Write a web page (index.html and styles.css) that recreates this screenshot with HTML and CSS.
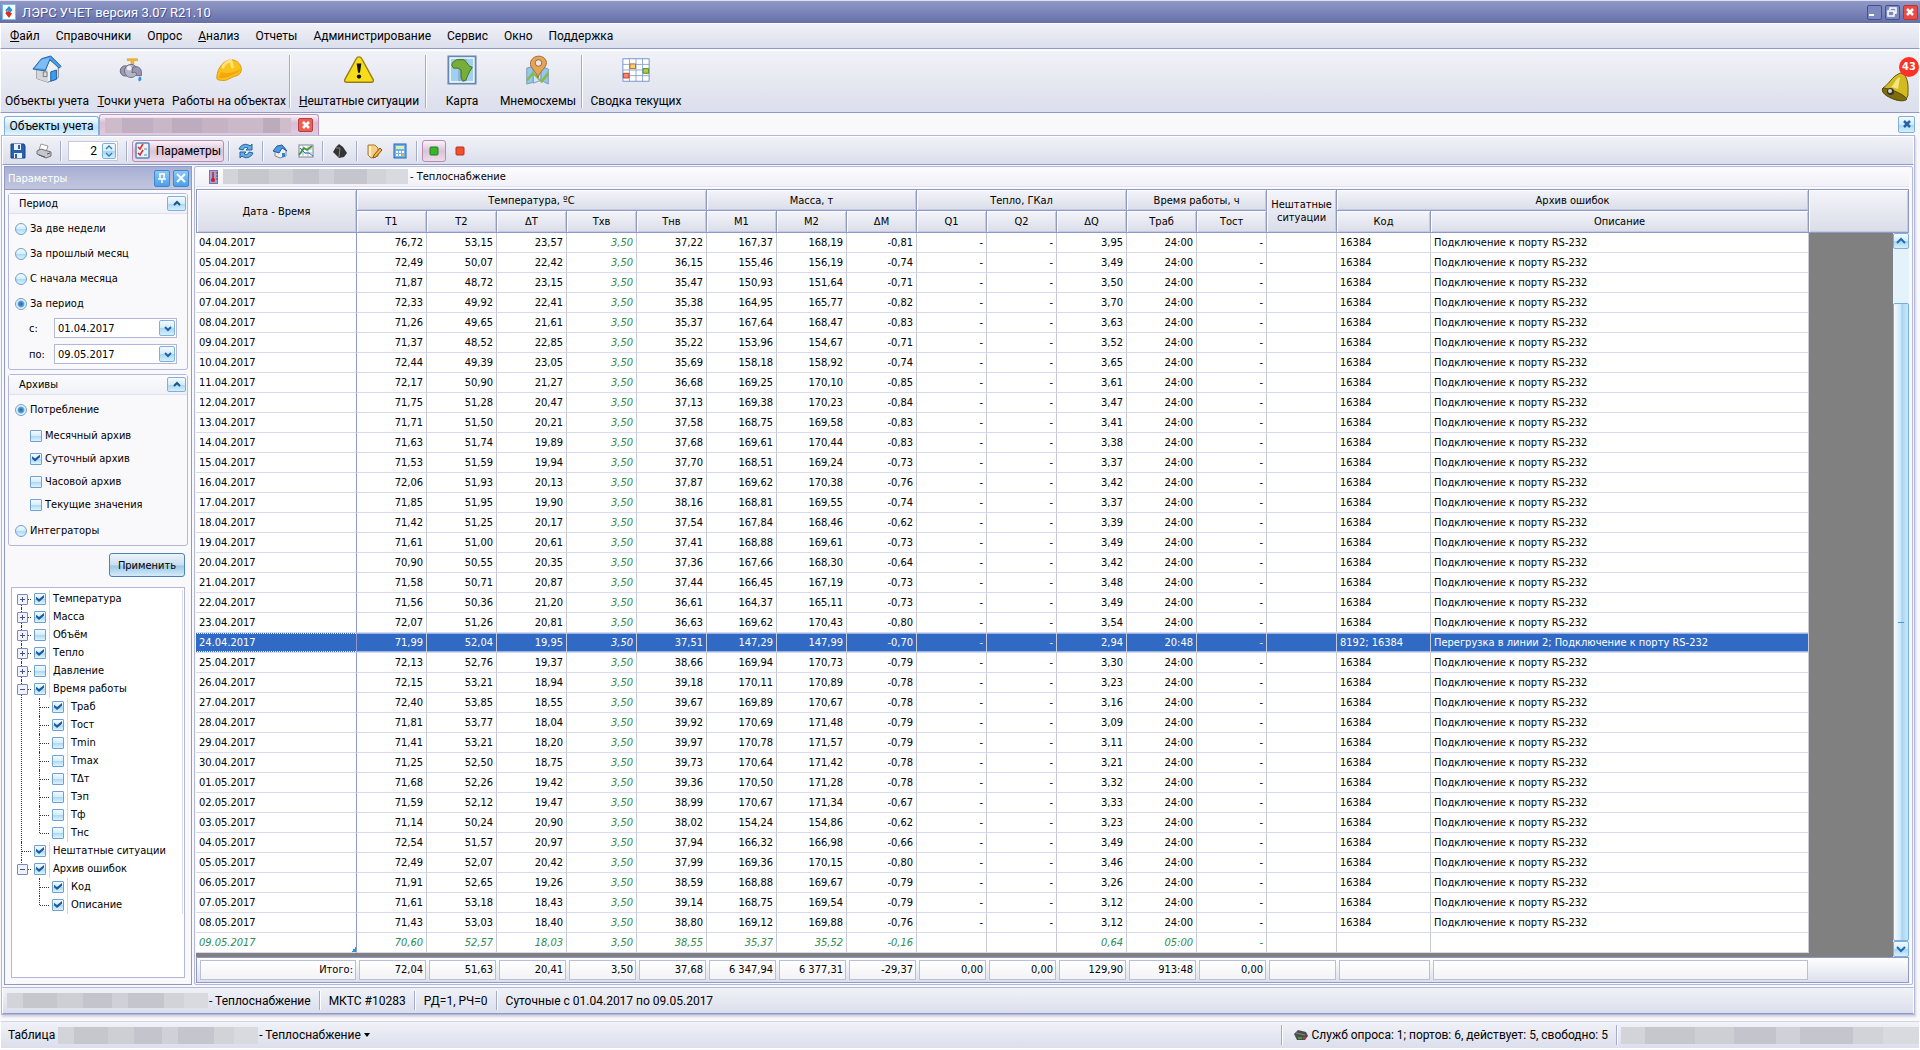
FILE: index.html
```html
<!DOCTYPE html>
<html lang="ru">
<head>
<meta charset="utf-8">
<title>ЛЭРС УЧЕТ версия 3.07 R21.10</title>
<link rel="stylesheet" href="styles.css">
</head>
<body>
<header class="titlebar">
  <svg class="app-icon" width="14" height="16" viewBox="0 0 14 16"><rect x="0.500" y="0.500" width="13" height="15" fill="#fff" stroke="#6cc4ee"/><path d="M7 2l3.500 4-2 2.500L6 6.500 4 8 3.500 6z" fill="#1d9ad8"/><path d="M4 8l2.500-1L10 9.500 7 14 3.500 9.500z" fill="#e22a20"/></svg>
  <h1>ЛЭРС УЧЕТ версия 3.07 R21.10</h1>
  <div class="window-buttons">
    <button aria-label="Свернуть"><svg width="12" height="12"><rect x="1" y="8" width="5" height="2" fill="#fff"/></svg></button>
    <button aria-label="Восстановить"><svg width="12" height="12"><path d="M4 4V2h6v5H8M2 5h6v5H2z" fill="none" stroke="#fff" stroke-width="1.500"/></svg></button>
    <button class="danger" aria-label="Закрыть"><svg width="12" height="12"><path d="M3 3l6 6M9 3l-6 6" stroke="#fff" stroke-width="2.500"/></svg></button>
  </div>
</header>
<nav class="menu bar">
  <a href="#"><u>Ф</u>айл</a><a href="#">Справочники</a><a href="#">Опрос</a><a href="#"><u>А</u>нализ</a><a href="#">Отчеты</a><a href="#">Администрирование</a><a href="#">Сервис</a><a href="#">Окно</a><a href="#">Поддержка</a>
</nav>
<div class="main-tools bar">
  <div class="big-buttons">
    <button><svg width="32" height="32" viewBox="0 0 32 32"><path d="M5 14L11 6l11-2 6 9v11l-11 5-12-4z" fill="#eef0f2" stroke="#777"/><path d="M5 14v11l12 4V17L11 8z" fill="#d3d6da"/><path d="M1 15L10 4l10-3 11 11-2 2-10-9-5 12-13-2z" fill="#4a9be8" stroke="#1d62ae"/><path d="M10 5l9-2 -5 12-11-1z" fill="#7fbdf2"/><path d="M20 18l6-2v10l-6 2z" fill="#3f9df0" stroke="#15599f"/><path d="M12 18h4v5h-4z" fill="#ddd" stroke="#777"/></svg><span>Объекты учета</span></button>
    <button><svg width="32" height="32" viewBox="0 0 32 32"><path d="M12 4h11v2h-4v4h-3V6h-4z" fill="#f5b92e" stroke="#d08a18" stroke-width=".5"/><circle cx="10" cy="17" r="5.500" fill="#9a9aac" stroke="#62627a"/><circle cx="16" cy="17" r="7" fill="#b5b5c8" stroke="#6c6c84"/><path d="M18 13c7-2 10 2 9 9h-5c0-4-2-4-5-3z" fill="#9898b4" stroke="#65657d"/><circle cx="14" cy="14" r="2.500" fill="#ededf6"/><path d="M25 23c-4 6 3 7 2 1z" fill="#2f93e8"/></svg><span><u>Т</u>очки учета</span></button>
    <button><svg width="32" height="32" viewBox="0 0 32 32"><path d="M3 25c0-6 3-18 15-20 7 0 12 6 11 12-1 4-4 5-8 6-6 3-9 5-13 4-3 0-5-1-5-2z" fill="#fcc21c" stroke="#d99308"/><path d="M8 18c3 2 12 2 20-3-1 5-6 5-10 7-5 2-9 4-14 2z" fill="#f3a90c"/><path d="M9 14c2-5 5-7 9-8l2 8" fill="none" stroke="#ffe478" stroke-width="3"/></svg><span>Работы на объектах</span></button>
    <i class="sep"></i>
    <button><svg width="32" height="32" viewBox="0 0 32 32"><path d="M16 2c1 0 2 0 3 2l12 22c1 2 0 3-2 3H3c-2 0-3-1-2-3L13 4c1-2 2-2 3-2z" fill="#f5dd19" stroke="#9c7b16" stroke-width="1.500"/><path d="M13.500 9h5l-1.500 10h-2z" fill="#111"/><circle cx="16" cy="23" r="2.300" fill="#111"/></svg><span><u>Н</u>ештатные ситуации</span></button>
    <i class="sep"></i>
    <button><svg width="32" height="32" viewBox="0 0 32 32"><path d="M1.500 1.500h29v29h-29z" fill="#fff" stroke="#6488b4" stroke-width="2"/><path d="M4 4h24v24H4z" fill="#9fd0f0"/><path d="M12 4h9v24h-9z" fill="#7396b4" opacity=".5"/><path d="M6 8l4-3 8 0 3 3 3 4 3 1-3 5-2 4-2 5-3 1-2-4v-8l-3-2-5 0-2-3z" fill="#78ad38" stroke="#3d6f1c"/></svg><span>Карта</span></button>
    <button><svg width="32" height="32" viewBox="0 0 32 32"><path d="M4 14l7-2v17l-7 2zM19 12l8 3v16l-8-4z" fill="#8fc9ee" stroke="#8494b0"/><path d="M11 12l8 2v13l-8 3z" fill="#cfe6f6" stroke="#8494b0"/><path d="M4 25l7-8 8 10 8-10v5l-7 8-9-9-7 8z" fill="#8bba4c"/><path d="M16 24C14 17 7 14 8 8c2-9 16-9 17 0 0 6-7 9-9 16z" fill="#e5a458" stroke="#9b632c"/><circle cx="16.500" cy="8.500" r="3.500" fill="#ece8e4" stroke="#9b632c"/></svg><span>Мнемосхемы</span></button>
    <i class="sep"></i>
    <button><svg width="32" height="32" viewBox="0 0 32 32"><path d="M2 4h28v24H2z" fill="#fff" stroke="#6f8fc6"/><path d="M9 4v24M16 4v24M23 4v24M2 10h28M2 16h28M2 22h28" stroke="#89a3d0"/><path d="M9.500 9.500h6v5h-6z" fill="#f6cf7c" stroke="#b36c1a"/><path d="M23.500 14.500h6v5h-6z" fill="#a6cf4c" stroke="#5a8420"/><path d="M2.500 19.500h6v5h-6z" fill="#f28478" stroke="#c4382c"/></svg><span>Сводка текущих</span></button>
  </div>
  <button class="bell" aria-label="Уведомления"><svg width="30" height="32" viewBox="0 0 30 32"><path d="M19 3l4 1c5 7 4 14 4 21-1 6-8 7-16 3C3 25 0 21 2 18c5-3 8-9 12-12z" fill="#d3ba20" stroke="#675b0b"/><path d="M2 18c4 0 20 5 24 11-2 3-10 2-16-1C3 25 0 21 2 18z" fill="#7d6c0c" stroke="#554a06"/><path d="M10 17c4-3 4-8 9-10l-2 12z" fill="#f3e680"/><circle cx="9.500" cy="21.500" r="3.500" fill="#333"/><circle cx="9" cy="21" r="2" fill="#d5d5d5"/></svg><span class="badge">43</span></button>
</div>
<div class="tabs">
  <button class="tab">Объекты учета</button>
  <div class="tab active"><i class="mosaic pink"></i><button class="tab-close" aria-label="Закрыть вкладку"><svg width="12" height="12"><path d="M3 3l6 6M9 3l-6 6" stroke="#fff" stroke-width="2.500"/></svg></button></div>
  <button class="square close-doc" aria-label="Закрыть документ"><svg width="14" height="14"><path d="M4 4l6 6M10 4l-6 6" stroke="#2462a6" stroke-width="2.500"/></svg></button>
</div>
<main class="document">
  <div class="tools bar">
    <button aria-label="Сохранить"><svg width="16" height="16"><path d="M1 1h13l1 2v12H1z" fill="#2862ae" stroke="#174280"/><path d="M4 1h7v6H4zM4 10h8v5H4z" fill="#e8f1fa"/><path d="M8 2h2v4H8zM5 11h2v4H5z" fill="#2862ae"/></svg></button>
    <button aria-label="Печать"><svg width="16" height="16"><path d="M3 7l2-6 7 2-2 6z" fill="#fff" stroke="#999"/><path d="M1 8l4-2 10 3v4l-5 2-9-4z" fill="#c4c6cb" stroke="#6d6f75"/><path d="M3 12l6 2M11 11l3-1" stroke="#555"/></svg></button>
    <i class="sep"></i>
    <span class="spinner"><input aria-label="Число знаков" value="2"><button class="square" aria-label="Изменить"><svg width="10" height="14"><path d="M2 5l3-3 3 3M2 9l3 3 3-3" fill="none" stroke="#287cb8" stroke-width="1.300"/></svg></button></span>
    <i class="sep"></i>
    <button class="pressed wide"><svg width="16" height="18"><rect x="1" y="1" width="13" height="15" rx="1" fill="#e7f1fa" stroke="#5389be" stroke-width="1.500"/><path d="M3 5l2 2 3-5M3 11l2 2 3-5" fill="none" stroke="#d92c22" stroke-width="1.500"/><path d="M9 7h3M9 13h3" stroke="#5389be"/></svg>Параметры</button>
    <i class="sep"></i>
    <button aria-label="Обновить"><svg width="16" height="16"><path d="M1 6c2-5 8-6 11-3l2-2v6H8l2-2C8 4 6 4 5 7z" fill="#64aee6" stroke="#23629f"/><path d="M15 10c-2 5-8 6-11 3l-2 2V9h6l-2 2c2 1 4 1 5-2z" fill="#64aee6" stroke="#23629f"/></svg></button>
    <i class="sep"></i>
    <button aria-label="Объект"><svg width="16" height="16"><path d="M3 7v6l5 2 6-2V7l-4-5z" fill="#eee" stroke="#888"/><path d="M1 8l4-5 5-1 5 6-5-3-3 5z" fill="#4a9be0" stroke="#245d9c"/><path d="M10 10h3v4h-3z" fill="#2f83d0"/></svg></button>
    <button aria-label="График"><svg width="16" height="16"><rect x="1" y="2" width="14" height="12" fill="#fff" stroke="#7b8190"/><path d="M1 6h14M1 10h14M5 2v12M10 2v12" stroke="#b5bac6"/><path d="M1 12l5-7 3 2 5-4" fill="none" stroke="#3e9a2e" stroke-width="1.800"/><path d="M2 5l5 5 4 0 4 3" fill="none" stroke="#2e6fba"/></svg></button>
    <i class="sep"></i>
    <button aria-label="Масса"><svg width="16" height="16"><path d="M1 9l3-5 3-3 4 3 4 6-3 4-5 1z" fill="#343434"/><path d="M4 5l4 0-1 9" fill="none" stroke="#888"/></svg></button>
    <i class="sep"></i>
    <button aria-label="Изменить данные"><svg width="16" height="16"><path d="M2 2l7 0 3 3v8l-7 2-3-3z" fill="#f6cd82" stroke="#ad792c"/><path d="M4 3v10" stroke="#fff3d2" stroke-width="2"/><path d="M14 5l2 2-6 7-3 1 1-3z" fill="#f5b33a" stroke="#7d5522"/></svg></button>
    <button aria-label="Калькулятор"><svg width="16" height="16"><rect x="2" y="1" width="12" height="14" fill="#72b1ed" stroke="#2768ac"/><path d="M4 3h8v3H4z" fill="#d9f2b0"/><path d="M4 8h2v2H4zM7 8h2v2H7zM10 8h2v2h-2zM4 11h2v2H4zM7 11h2v2H7z" fill="#fff"/><path d="M10 11h2v2h-2z" fill="#f0b030"/></svg></button>
    <i class="sep"></i>
    <button class="pressed" aria-label="Включить"><svg width="16" height="16"><rect x="4" y="4" width="8" height="8" rx="1" fill="#35b72c" stroke="#267d20"/></svg></button>
    <button aria-label="Остановить"><svg width="16" height="16"><rect x="4" y="4" width="8" height="8" rx="1" fill="#f3512e" stroke="#b33018"/></svg></button>
  </div>
  <div class="workspace">
    <aside class="panel">
      <div class="panel-head"><h2>Параметры</h2>
        <button aria-label="Закрепить"><svg width="14" height="14"><path d="M4 3h6M5 3v5M9 3v5M3 8h8M7 8v4" stroke="#fff" stroke-width="1.500"/></svg></button>
        <button aria-label="Закрыть панель"><svg width="14" height="14"><path d="M3 3l8 8M11 3l-8 8" stroke="#fff" stroke-width="2"/></svg></button>
      </div>
      <section class="group">
        <h3>Период<button class="square" aria-label="Свернуть период"><svg width="14" height="10"><path d="M4 6l3-3 3 3" fill="none" stroke="#14598c" stroke-width="2"/></svg></button></h3>
        <div class="radios">
          <label><input type="radio" name="period">За две недели</label>
          <label><input type="radio" name="period">За прошлый месяц</label>
          <label><input type="radio" name="period">С начала месяца</label>
          <label><input type="radio" name="period" checked>За период</label>
        </div>
        <div class="dates">
          <label for="from">с:</label><span class="field"><input id="from" value="01.04.2017"><button class="square" aria-label="Календарь"><svg width="13" height="13"><path d="M4 5l3 3 3-3" fill="none" stroke="#2462a6" stroke-width="2"/></svg></button></span>
          <label for="to">по:</label><span class="field"><input id="to" value="09.05.2017"><button class="square" aria-label="Календарь"><svg width="13" height="13"><path d="M4 5l3 3 3-3" fill="none" stroke="#2462a6" stroke-width="2"/></svg></button></span>
        </div>
      </section>
      <section class="group">
        <h3>Архивы<button class="square" aria-label="Свернуть архивы"><svg width="14" height="10"><path d="M4 6l3-3 3 3" fill="none" stroke="#14598c" stroke-width="2"/></svg></button></h3>
        <div class="radios">
          <label><input type="radio" name="kind" checked>Потребление</label>
        </div>
        <div class="checks">
          <label><input type="checkbox">Месячный архив</label>
          <label><input type="checkbox" checked>Суточный архив</label>
          <label><input type="checkbox">Часовой архив</label>
          <label><input type="checkbox">Текущие значения</label>
        </div>
        <div class="radios">
          <label><input type="radio" name="kind">Интеграторы</label>
        </div>
      </section>
      <button class="apply">Применить</button>
      <div class="tree">
        <ul>
          <li><label class="closed"><input type="checkbox" checked><span>Температура</span></label></li>
          <li><label class="closed"><input type="checkbox" checked><span>Масса</span></label></li>
          <li><label class="closed"><input type="checkbox"><span>Объём</span></label></li>
          <li><label class="closed"><input type="checkbox" checked><span>Тепло</span></label></li>
          <li><label class="closed"><input type="checkbox"><span>Давление</span></label></li>
          <li><label class="open"><input type="checkbox" checked><span>Время работы</span></label>
            <ul>
              <li><label><input type="checkbox" checked><span>Траб</span></label></li>
              <li><label><input type="checkbox" checked><span>Тост</span></label></li>
              <li><label><input type="checkbox"><span>Tmin</span></label></li>
              <li><label><input type="checkbox"><span>Tmax</span></label></li>
              <li><label><input type="checkbox"><span>TΔт</span></label></li>
              <li><label><input type="checkbox"><span>Тэп</span></label></li>
              <li><label><input type="checkbox"><span>Тф</span></label></li>
              <li><label><input type="checkbox"><span>Тнс</span></label></li>
            </ul>
          </li>
          <li><label><input type="checkbox" checked><span>Нештатные ситуации</span></label></li>
          <li><label class="open"><input type="checkbox" checked><span>Архив ошибок</span></label>
            <ul>
              <li><label><input type="checkbox" checked><span>Код</span></label></li>
              <li><label><input type="checkbox" checked><span>Описание</span></label></li>
            </ul>
          </li>
        </ul>
      </div>
    </aside>
    <section class="report">
      <div class="report-head">
        <svg width="10" height="14"><rect x="0.500" y="0.500" width="8" height="13" fill="#a3a1d6" stroke="#7773b5"/><path d="M4 2v8" stroke="#c81e1e" stroke-width="1.500"/><circle cx="4" cy="10" r="2" fill="#c81e1e"/><path d="M7 3h2M7 6h2M7 9h2" stroke="#555"/></svg>
        <i class="mosaic"></i><span>- Теплоснабжение</span>
      </div>
      <div class="grid">
        <table class="head">
          <colgroup><col class="date"><col span="13" class="num"><col class="num"><col class="code"><col class="desc"><col></colgroup>
          <thead>
            <tr><th rowspan="2">Дата - Время</th><th colspan="5">Температура, ºC</th><th colspan="3">Масса, т</th><th colspan="3">Тепло, ГКал</th><th colspan="2">Время работы, ч</th><th rowspan="2" class="tight">Нештатные ситуации</th><th colspan="2">Архив ошибок</th><th rowspan="2"></th></tr>
            <tr><th>T1</th><th>T2</th><th>ΔT</th><th>Тхв</th><th>Тнв</th><th>M1</th><th>M2</th><th>ΔM</th><th>Q1</th><th>Q2</th><th>ΔQ</th><th>Траб</th><th>Тост</th><th>Код</th><th>Описание</th></tr>
          </thead>
        </table>
        <div class="body">
          <table>
            <colgroup><col class="date"><col span="13" class="num"><col class="num"><col class="code"><col class="desc"><col></colgroup>
            <tbody id="rows"></tbody>
          </table>
          <div class="scrollbar">
            <button class="square" aria-label="Вверх"><svg width="14" height="14"><path d="M3 9l4-4 4 4" fill="none" stroke="#1d6db0" stroke-width="2"/></svg></button>
            <i class="track"></i>
            <i class="thumb"></i>
            <button class="square" aria-label="Вниз"><svg width="14" height="14"><path d="M3 5l4 4 4-4" fill="none" stroke="#1d6db0" stroke-width="2"/></svg></button>
          </div>
        </div>
        <table class="foot">
          <colgroup><col class="date"><col span="13" class="num"><col class="num"><col class="code"><col class="desc"><col></colgroup>
          <tbody><tr><td><div>Итого:</div></td><td><div>72,04</div></td><td><div>51,63</div></td><td><div>20,41</div></td><td><div>3,50</div></td><td><div>37,68</div></td><td><div>6 347,94</div></td><td><div>6 377,31</div></td><td><div>-29,37</div></td><td><div>0,00</div></td><td><div>0,00</div></td><td><div>129,90</div></td><td><div>913:48</div></td><td><div>0,00</div></td><td><div></div></td><td><div></div></td><td><div></div></td><td></td></tr></tbody>
        </table>
      </div>
    </section>
  </div>
  <div class="status bar">
    <i class="mosaic"></i><span>- Теплоснабжение</span><i class="sep"></i><span>МКТС #10283</span><i class="sep"></i><span>РД=1, РЧ=0</span><i class="sep"></i><span>Суточные с 01.04.2017 по 09.05.2017</span>
  </div>
</main>
<footer class="bottom bar">
  <span>Таблица</span><i class="mosaic"></i><span>- Теплоснабжение</span><svg width="6" height="4"><path d="M0 0h6L3 4z"/></svg>
  <i class="sep first"></i>
  <svg width="15" height="12"><path d="M1 5l4-4 8 2 2 4-3 4H4z" fill="#4d4d4d"/><path d="M3 4l9 2" stroke="#888"/><path d="M5 9h4" stroke="#36a23a" stroke-width="2"/><path d="M10 9h3" stroke="#c33" stroke-width="2"/></svg>
  <span class="service">Служб опроса: 1; портов: 6, действует: 5, свободно: 5</span>
  <i class="sep"></i><i class="mosaic user"></i>
</footer>
<script src="app.js"></script>
</body>
</html>
```
FILE: styles.css
```css
:root {
  --line: #8f98c6;
  --soft: #b3b8da;
  --small: 11px "DejaVu Sans Condensed", "DejaVu Sans", sans-serif;
  --ui: 12px Roboto, "Noto Sans", sans-serif;
}
* { box-sizing: border-box; }
body {
  margin: 0;
  min-height: 100vh;
  display: flex;
  flex-direction: column;
  background: #f9f9fc;
  color: #000;
  font: var(--ui);
}
h1, h2, h3 { margin: 0; font-weight: normal; }
button { margin: 0; padding: 0; border: 0; background: none; font: inherit; color: inherit; }
input { margin: 0; padding: 0; border: 0; font: inherit; color: inherit; }
svg { display: block; flex: none; }
a { color: inherit; text-decoration: none; }
ul { list-style: none; margin: 0; padding: 0; }
.bar {
  display: flex;
  align-items: center;
  flex: none;
  background: linear-gradient(#f1f2f7, #dbdeec);
  border: 1px solid #fff;
  border-bottom-color: var(--line);
}
.sep { width: 2px; flex: none; background: linear-gradient(90deg, #a2aad2 50%, #fff 50%); }
.square {
  display: flex;
  align-items: center;
  justify-content: center;
  border: 1px solid #7fb0d8;
  border-radius: 2px;
  background: linear-gradient(#f2faff, #d4ebfb 50%, #a9d5f5 52%, #d5effc);
}
.mosaic {
  height: 15px;
  flex: none;
  background: linear-gradient(90deg, #d3d4d9 0 8%, #c6c7cc 8% 25%, #cecfd5 25% 38%, #c4c5cc 38% 52%, #d0d1d8 52% 60%, #c5c5cd 60% 78%, #d2d3d8 78% 88%, #d9dadf 88%);
}
.mosaic.pink { background: linear-gradient(90deg, #cdbbca 0 9%, #bfafc0 9% 26%, #c8b7c7 26% 36%, #bdacbd 36% 52%, #c5b3c4 52% 66%, #cab9c9 66% 85%, #bbabbb 85% 94%, #cfbdcc 94%); }

.titlebar {
  display: flex;
  align-items: center;
  height: 23px;
  padding: 0 2px;
  border-top: 1px solid #dcdff0;
  background: linear-gradient(#8f98c6, #7f89bb 40%, #666fa8);
  color: #fff;
}
.titlebar h1 { flex: 1; margin-left: 6px; font: 13px Roboto, "Noto Sans", sans-serif; text-shadow: 1px 1px #49528c; }
.window-buttons { display: flex; gap: 3px; }
.window-buttons button { width: 15px; height: 15px; border: 1px solid #454f8c; border-radius: 2px; background: #7d88be; }
.window-buttons .danger { background: #ea4b43; border-color: #c03030; }

.menu { height: 26px; padding-left: 1px; }
.menu a { padding: 0 8px; }

.main-tools { height: 63px; margin-top: 1px; justify-content: space-between; }
.big-buttons {
  display: grid;
  grid-template-columns: 92px 76px 120px 4px 132px 4px 66px 86px 4px 102px;
  height: 53px;
}
.big-buttons button { display: flex; flex-direction: column; align-items: center; justify-content: space-between; white-space: nowrap; }
.big-buttons svg { width: 30px; height: 30px; }
.bell { position: relative; width: 38px; height: 48px; padding-top: 8px; }
.badge {
  position: absolute;
  top: -1px;
  right: 0;
  width: 20px;
  height: 20px;
  border-radius: 10px;
  background: #fb3224;
  color: #fff;
  font: bold 11px/20px "DejaVu Sans Condensed", sans-serif;
  text-align: center;
}

.tabs { display: flex; align-items: flex-end; height: 22px; padding: 0 5px 0 4px; }
.tab {
  width: 95px;
  height: 19px;
  border: 1px solid #7fb0d8;
  border-bottom: 0;
  border-radius: 3px 3px 0 0;
  background: linear-gradient(#fdfeff, #b9e1f8 60%, #e4f6fe);
}
.tab.active {
  display: flex;
  align-items: center;
  justify-content: space-between;
  width: 220px;
  height: 21px;
  padding: 0 5px;
  border-color: #c193bb;
  background: linear-gradient(#fbf5fa, #d9bdd6 40%, #e2cade);
}
.tab .mosaic { width: 186px; }
.tab-close { width: 15px; height: 14px; border: 1px solid #b3423e; border-radius: 2px; background: #ed5f55; display: flex; align-items: center; justify-content: center; }
.close-doc { width: 17px; height: 17px; margin-left: auto; align-self: center; }

.document {
  flex: 1;
  display: flex;
  flex-direction: column;
  margin: 0 5px 0 1px;
  border: 1px solid var(--soft);
  box-shadow: 1px 2px 2px #d3d3dc;
}
.tools { height: 29px; padding-left: 7px; gap: 10px; }
.tools button { display: flex; }
.tools > .sep { height: 20px; margin: 0 -2px; }
.spinner { display: flex; width: 50px; height: 20px; margin-left: -2px; padding: 1px; background: #fff; border: 1px solid #c4c7de; }
.spinner input { width: 32px; padding-right: 5px; text-align: right; }
.spinner button { width: 15px; }
.tools .pressed {
  align-items: center;
  justify-content: center;
  height: 22px;
  width: 24px;
  margin: 0 -4px;
  border: 1px solid #b88ab4;
  border-radius: 3px;
  background: linear-gradient(#faf3f9, #dcc2d8 50%, #ecdcea);
}
.tools .wide { width: 92px; gap: 5px; }

.workspace { flex: 1; display: flex; gap: 2px; padding: 1px 1px 2px 2px; font: var(--small); }
.panel { flex: none; width: 188px; display: flex; flex-direction: column; border: 1px solid var(--line); }
.panel-head { display: flex; align-items: center; gap: 3px; height: 23px; padding: 0 2px 0 3px; background: linear-gradient(#a8afd5, #c3c7dd); border-bottom: 1px solid var(--line); color: #fff; }
.panel-head h2 { flex: 1; font: inherit; }
.panel-head button { display: flex; align-items: center; justify-content: center; width: 16px; height: 17px; border: 1px solid #3d87ce; border-radius: 2px; background: linear-gradient(#8cc8f6, #4ba0ea); }
.group { margin: 3px 3px 1px; border: 1px solid var(--soft); border-radius: 3px; padding-bottom: 2px; }
.group h3 { display: flex; align-items: center; justify-content: space-between; height: 20px; padding: 0 1px 0 10px; font: inherit; border-bottom: 1px solid #dfe1f0; background: linear-gradient(#fbfbfe, #f0f1f7); }
.group h3 .square { width: 19px; height: 15px; }
.radios { padding: 2px 0 0 6px; }
.radios label { display: flex; align-items: center; gap: 3px; height: 25px; }
input[type="radio"], input[type="checkbox"] {
  appearance: none;
  flex: none;
  width: 12px;
  height: 12px;
  border: 1px solid #6fa0ce;
  background: linear-gradient(#f2faff, #d5ecfb 50%, #aad8f6 52%, #ddf4ff);
}
input[type="radio"] { border-radius: 6px; }
input[type="radio"]:checked { background: radial-gradient(#2d74b8 0 1px, #6aa8dc 3px, #e6f4fe 4px); }
input[type="checkbox"] { border-radius: 1px; }
input[type="checkbox"]:checked::after {
  content: "";
  display: block;
  width: 8px;
  height: 7px;
  margin: 1px;
  background: #1c5c9e;
  clip-path: polygon(0 25%, 38% 58%, 100% 0, 100% 40%, 38% 100%, 0 62%);
}
.dates { display: grid; grid-template-columns: 24px 123px; gap: 6px 1px; padding: 2px 0 3px 20px; align-items: center; }
.field { display: flex; height: 20px; padding: 1px; border: 1px solid var(--soft); background: #fff; }
.field input { flex: 1; min-width: 0; padding-left: 2px; }
.field button { width: 16px; }
.checks { padding: 2px 0 0 21px; }
.checks label { display: flex; align-items: center; gap: 3px; height: 23px; }
.apply { align-self: flex-end; width: 76px; height: 24px; margin: 6px 6px 10px; border: 1px solid #4b83b4; border-radius: 3px; background: linear-gradient(#eef4f9, #c8def0 50%, #9cc7e8 54%, #d4ebf8); }
.tree { flex: 1; margin: 0 6px 6px; padding: 2px 1px 2px 4px; border: 1px solid var(--soft); background: #fff; }
.tree > ul { border-right: 1px solid #dcdcf2; }
.tree li { position: relative; }
.tree li::before { content: ""; position: absolute; left: 5px; top: 0; bottom: 0; border-left: 1px dotted #333; }
.tree > ul > li:first-child::before { top: 9px; }
.tree li:last-child::before { bottom: auto; height: 9px; }
.tree ul ul { padding-left: 18px; }
.tree label { display: flex; align-items: center; height: 18px; padding-left: 18px; position: relative; }
.tree label::before { content: ""; position: absolute; left: 6px; top: 9px; width: 9px; border-top: 1px dotted #333; }
.tree .closed::after, .tree .open::after {
  content: "";
  position: absolute;
  left: 1px;
  top: 4px;
  width: 9px;
  height: 9px;
  border: 1px solid #7e88b8;
  border-radius: 1px;
  background: linear-gradient(#46528c, #46528c) center / 5px 1px no-repeat, #f0f1f9;
}
.tree .closed::after { background: linear-gradient(#46528c, #46528c) center / 5px 1px no-repeat, linear-gradient(#46528c, #46528c) center / 1px 5px no-repeat, #f0f1f9; }
.tree label span { margin-left: 3px; padding-left: 3px; height: 18px; line-height: 18px; border-left: 1px solid #d5d5ef; }

.report { flex: 1; min-width: 0; display: flex; flex-direction: column; padding: 0 3px 1px 1px; border: 1px solid var(--soft); border-radius: 2px; }
.report-head { display: flex; align-items: center; height: 20px; margin-bottom: 2px; padding-left: 13px; background: linear-gradient(#fcfcfe, #f1f1f7); border-bottom: 1px solid #e2e3ef; }
.report-head .mosaic { width: 185px; margin: 0 2px 0 4px; }
.grid { flex: 1; display: flex; flex-direction: column; }
table { width: 100%; table-layout: fixed; border-collapse: separate; border-spacing: 0; }
.date { width: 161px; }
.num { width: 70px; }
.code { width: 94px; }
.desc { width: 378px; }
.head { border-top: 1px solid var(--line); border-left: 1px solid var(--line); }
.head .date, .foot .date { width: 160px; }
th { height: 21px; padding: 0; font-weight: normal; background: linear-gradient(#f4f5f9, #dadde9); border-right: 1px solid var(--line); border-bottom: 1px solid var(--line); box-shadow: inset 1px 1px #fff, inset -1px -1px #c6cae0; }
tr + tr th { height: 22px; }
.tight { line-height: 13px; }
.body { flex: 1; display: flex; align-items: flex-start; background: #808080; }
.body td { height: 20px; padding: 0 3px; text-align: right; background: #fff; border-right: 1px solid #c8cad6; border-bottom: 1px solid #d8d9f0; white-space: nowrap; line-height: 16px; }
.body td:first-child { text-align: left; border-right-color: var(--line); }
.body td.text { text-align: left; }
.body td:last-child { background: #808080; border: 0; }
.body .norm, .body .partial td { color: #2e8b57; font-style: italic; }
.body .selected td:not(:last-child) {
  color: #fff;
  background: linear-gradient(90deg, #fff 50%, transparent 50%) top / 2px 1px repeat-x, linear-gradient(90deg, #fff 50%, transparent 50%) bottom / 2px 1px repeat-x, #316ac5;
}
.body .partial td:first-child { background: linear-gradient(135deg, transparent 50%, #1a9ae0 50%) right bottom / 5px 5px no-repeat, #fff; }
.scrollbar { align-self: stretch; flex: none; width: 16px; display: flex; flex-direction: column; background: #e4f2fb; }
.scrollbar button { height: 16px; flex: none; }
.track { height: 54px; }
.thumb { flex: 1; border: 1px solid #75aedb; border-radius: 2px; background: linear-gradient(#4d94cc, #4d94cc) center / 6px 1px no-repeat, linear-gradient(90deg, #f5fbff, #cbe7fa 50%, #a6d4f5 55%, #c8e9fb); }
.foot { border: 1px solid var(--line); background: linear-gradient(#fff, #dcdfec); }
.foot td { height: 24px; padding: 0 1px 0 2px; }
.foot td:first-child { padding-left: 3px; }
.foot div { height: 20px; padding-right: 2px; line-height: 18px; text-align: right; white-space: nowrap; border: 1px solid #b9bedb; background: linear-gradient(#fff, #f3f3f7); }

.status { height: 27px; padding-left: 4px; border-top-color: var(--soft); }
.status .mosaic { width: 201px; margin-right: 1px; }
.status .sep { height: 19px; margin: 0 8px; }
.bottom { height: 28px; margin: 6px 0 1px; padding-left: 7px; border-top-color: #d3d6e8; border-bottom-color: #fff; }
.bottom .mosaic { width: 200px; margin: 0 1px 0 3px; height: 17px; }
.bottom > svg { margin-left: 3px; }
.bottom .sep { height: 20px; margin-right: 3px; }
.bottom .first { margin-left: auto; margin-right: 7px; }
.service { margin: 0 8px 0 4px; }
.bottom .user { width: 298px; margin: 0; }
```
FILE: app.js
```javascript
// date; T1; T2; dT; Tнв; M1; M2; dM; dQ
const data = `04.04 76,72 53,15 23,57 37,22 167,37 168,19 -0,81 3,95
05.04 72,49 50,07 22,42 36,15 155,46 156,19 -0,74 3,49
06.04 71,87 48,72 23,15 35,47 150,93 151,64 -0,71 3,50
07.04 72,33 49,92 22,41 35,38 164,95 165,77 -0,82 3,70
08.04 71,26 49,65 21,61 35,37 167,64 168,47 -0,83 3,63
09.04 71,37 48,52 22,85 35,22 153,96 154,67 -0,71 3,52
10.04 72,44 49,39 23,05 35,69 158,18 158,92 -0,74 3,65
11.04 72,17 50,90 21,27 36,68 169,25 170,10 -0,85 3,61
12.04 71,75 51,28 20,47 37,13 169,38 170,23 -0,84 3,47
13.04 71,71 51,50 20,21 37,58 168,75 169,58 -0,83 3,41
14.04 71,63 51,74 19,89 37,68 169,61 170,44 -0,83 3,38
15.04 71,53 51,59 19,94 37,70 168,51 169,24 -0,73 3,37
16.04 72,06 51,93 20,13 37,87 169,62 170,38 -0,76 3,42
17.04 71,85 51,95 19,90 38,16 168,81 169,55 -0,74 3,37
18.04 71,42 51,25 20,17 37,54 167,84 168,46 -0,62 3,39
19.04 71,61 51,00 20,61 37,41 168,88 169,61 -0,73 3,49
20.04 70,90 50,55 20,35 37,36 167,66 168,30 -0,64 3,42
21.04 71,58 50,71 20,87 37,44 166,45 167,19 -0,73 3,48
22.04 71,56 50,36 21,20 36,61 164,37 165,11 -0,73 3,49
23.04 72,07 51,26 20,81 36,63 169,62 170,43 -0,80 3,54
24.04 71,99 52,04 19,95 37,51 147,29 147,99 -0,70 2,94
25.04 72,13 52,76 19,37 38,66 169,94 170,73 -0,79 3,30
26.04 72,15 53,21 18,94 39,18 170,11 170,89 -0,78 3,23
27.04 72,40 53,85 18,55 39,67 169,89 170,67 -0,78 3,16
28.04 71,81 53,77 18,04 39,92 170,69 171,48 -0,79 3,09
29.04 71,41 53,21 18,20 39,97 170,78 171,57 -0,79 3,11
30.04 71,25 52,50 18,75 39,73 170,64 171,42 -0,78 3,21
01.05 71,68 52,26 19,42 39,36 170,50 171,28 -0,78 3,32
02.05 71,59 52,12 19,47 38,99 170,67 171,34 -0,67 3,33
03.05 71,14 50,24 20,90 38,02 154,24 154,86 -0,62 3,23
04.05 72,54 51,57 20,97 37,94 166,32 166,98 -0,66 3,49
05.05 72,49 52,07 20,42 37,99 169,36 170,15 -0,80 3,46
06.05 71,91 52,65 19,26 38,59 168,88 169,67 -0,79 3,26
07.05 71,61 53,18 18,43 39,14 168,75 169,54 -0,79 3,12
08.05 71,43 53,03 18,40 38,80 169,12 169,88 -0,76 3,12
09.05 70,60 52,57 18,03 38,55 35,37 35,52 -0,16 0,64`;
const port = 'Подключение к порту RS-232';
const special = {
  '24.04': { cls: 'selected', hours: '20:48', code: '8192; 16384', text: 'Перегрузка в линии 2; ' + port },
  '09.05': { cls: 'partial', hours: '05:00', code: '', text: '', dash: '' },
};
const body = document.getElementById('rows');
for (const line of data.split('\n')) {
  const [day, t1, t2, dt, tn, m1, m2, dm, dq] = line.split(' ');
  const s = special[day] || { hours: '24:00', code: '16384', text: port };
  const dash = s.dash ?? '-';
  const row = body.insertRow();
  if (s.cls) row.className = s.cls;
  const cells = [day + '.2017', t1, t2, dt, '3,50', tn, m1, m2, dm, dash, dash, dq, s.hours, '-', '', s.code, s.text, ''];
  cells.forEach((value, i) => {
    const cell = row.insertCell();
    cell.textContent = value;
    if (i === 4 && s.cls !== 'selected') cell.className = 'norm';
    if (i === 4 && s.cls === 'selected') cell.style.fontStyle = 'italic';
    if (i === 15 || i === 16) cell.className = 'text';
  });
}
```
